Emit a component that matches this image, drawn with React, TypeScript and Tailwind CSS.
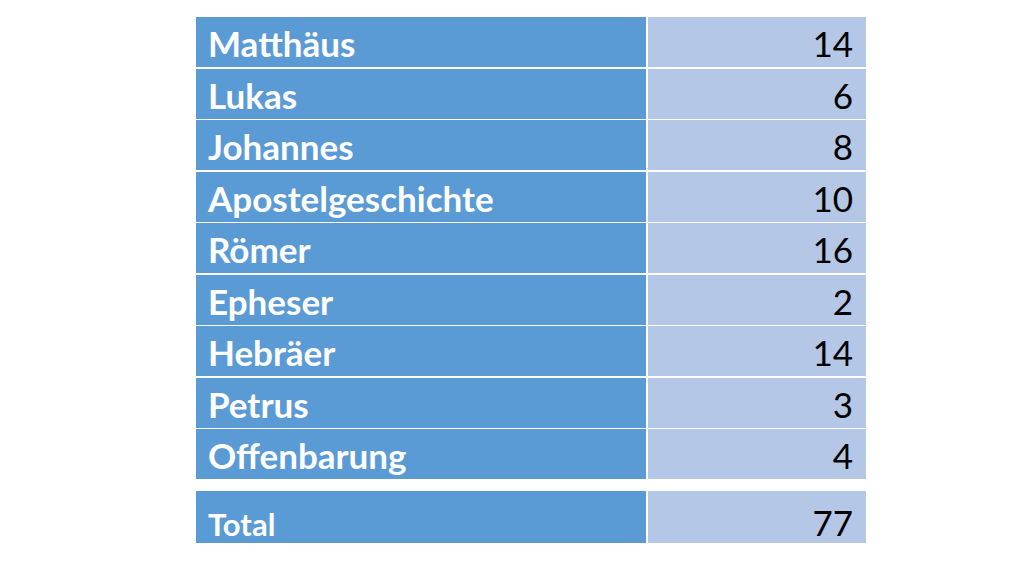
const rows: [string, number][] = [
  ['Matthäus', 14],
  ['Lukas', 6],
  ['Johannes', 8],
  ['Apostelgeschichte', 10],
  ['Römer', 16],
  ['Epheser', 2],
  ['Hebräer', 14],
  ['Petrus', 3],
  ['Offenbarung', 4],
]

const font = { fontFamily: 'Lato, "Open Sans", sans-serif' }

export default function App() {
  return (
    <div className="w-[1024px] h-[576px] bg-white pt-[17px] pl-[196px]" style={font}>
      <div className="w-[670px] flex flex-col gap-[1.5px]">
        {rows.map(([name, n]) => (
          <div key={name} className="flex h-[50px] gap-[2px]">
            <div className="w-[450px] bg-[#5b9bd5] text-white font-bold text-[35px] pl-[12px] pt-[3px] flex items-center">
              {name}
            </div>
            <div className="flex-1 bg-[#b4c7e7] text-black text-[35px] pr-[13px] pt-[3px] flex items-center justify-end">
              {n}
            </div>
          </div>
        ))}
      </div>
      <div className="w-[670px] flex h-[52px] gap-[2px] mt-[12px]">
        <div className="w-[450px] bg-[#5b9bd5] text-white font-bold text-[31px] leading-none pl-[12px] flex items-end pb-[3px]">
          Total
        </div>
        <div className="flex-1 bg-[#b4c7e7] text-black text-[35px] leading-none pr-[13px] flex items-end justify-end pb-[3px]">
          77
        </div>
      </div>
    </div>
  )
}
